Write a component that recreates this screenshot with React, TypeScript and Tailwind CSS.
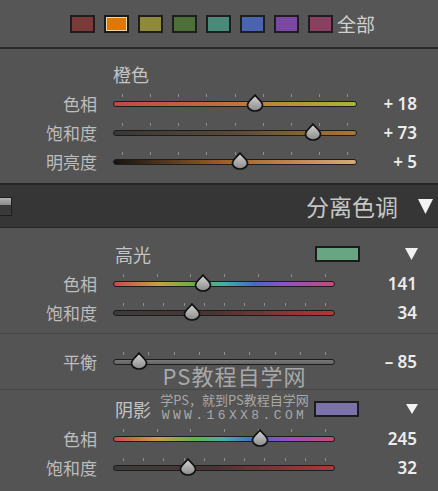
const swatches = [
  "bg-[#7a3a38]",
  "bg-[#e07800]",
  "bg-[#8e8a3a]",
  "bg-[#4e7038]",
  "bg-[#4a8a78]",
  "bg-[#4a64b0]",
  "bg-[#7a48a0]",
  "bg-[#8a4060]",
]

const cjk = "font-['Noto_Sans_CJK_SC',sans-serif]"

interface SliderRowProps {
  label: string
  value: string
  widthClass: string
  trackClass: string
  thumb: number
  ticks: number
  tickStart: number
  tickEnd: number
}

function Thumb({ left }: { left: number }) {
  return (
    <svg
      className="absolute top-[-7px]"
      style={{ left: left - 9 }}
      width="18"
      height="18"
      viewBox="0 0 18 18"
    >
      <defs>
        <linearGradient id="tg" x1="0" y1="0" x2="0" y2="1">
          <stop offset="0" stopColor="#d6d6d6" />
          <stop offset="1" stopColor="#8a8a8a" />
        </linearGradient>
      </defs>
      <path
        d="M9 1 C10.5 3.5 16.5 7.5 16.5 11 A7.5 6 0 0 1 1.5 11 C1.5 7.5 7.5 3.5 9 1 Z"
        fill="url(#tg)"
        stroke="#121212"
        strokeWidth="1.7"
        strokeLinejoin="round"
      />
    </svg>
  )
}

function SliderRow({ label, value, widthClass, trackClass, thumb, ticks, tickStart, tickEnd }: SliderRowProps) {
  const step = (tickEnd - tickStart) / (ticks - 1)
  return (
    <div className="flex h-[29px] items-center">
      <div className={`w-[97px] text-right text-[17px] leading-none text-[#bdbdbd] ${cjk}`}>{label}</div>
      <div className={`relative ml-[16px] h-[6px] ${widthClass}`}>
        {Array.from({ length: ticks }).map((_, i) => (
          <div
            key={i}
            className="absolute top-[-7px] h-[3px] w-px bg-[#8e8e8e]"
            style={{ left: Math.round(tickStart + i * step) }}
          />
        ))}
        <div className={`h-[6px] w-full rounded-full border border-[#1c1c1c] ${trackClass}`} />
        <Thumb left={thumb} />
      </div>
      <div className="flex-1 pr-[21px] text-right font-['Noto_Sans',sans-serif] text-[17px] font-semibold leading-none text-[#ececec]">
        {value}
      </div>
    </div>
  )
}

function DownTriangle({ w, h }: { w: number; h: number }) {
  return (
    <svg width={w} height={h} viewBox={`0 0 ${w} ${h}`}>
      <polygon points={`0,0 ${w},0 ${w / 2},${h}`} fill="#f2f2f2" />
    </svg>
  )
}

const hueFull =
  "bg-[linear-gradient(to_right,#c84a4e,#c8a040_20%,#68b048_36%,#40b0a8_50%,#4868c8_64%,#9050c8_78%,#c84a78_100%)]"
const satRed = "bg-[linear-gradient(to_right,#3c3c3c,#4a3434_45%,#b03838)]"

export default function App() {
  return (
    <div className={`relative h-[491px] w-[438px] overflow-hidden bg-[#545454] ${cjk}`}>
      {/* 颜色色块 */}
      <div className="flex h-[47px] items-center bg-[#565656] pl-[70px]">
        <div className="flex gap-[9px]">
          {swatches.map((c, i) => (
            <div
              key={i}
              className={`h-[18px] w-[25px] border-2 ${i === 1 ? "border-[#1a1a1a] outline outline-1 outline-[#e8d8b0] -outline-offset-3" : "border-[#1e1e1e]"} ${c}`}
            />
          ))}
        </div>
        <span className="ml-[4px] text-[19px] leading-none text-[#d0d0d0]">全部</span>
      </div>
      <div className="h-[2px] bg-[#2a2a2a]" />

      {/* 橙色 */}
      <div className="pt-[10px] pb-[7px]">
        <div className="flex h-[30px] items-center pl-[113px] text-[18px] leading-none text-[#c4c4c4]">橙色</div>
        <SliderRow
          label="色相"
          value="+ 18"
          widthClass="w-[244px]"
          trackClass="bg-[linear-gradient(to_right,#c04848,#c07838_55%,#a8b838)]"
          thumb={142}
          ticks={9}
          tickStart={9}
          tickEnd={234}
        />
        <SliderRow
          label="饱和度"
          value="+ 73"
          widthClass="w-[244px]"
          trackClass="bg-[linear-gradient(to_right,#383838,#5a4a38_50%,#a87838)]"
          thumb={200}
          ticks={9}
          tickStart={9}
          tickEnd={234}
        />
        <SliderRow
          label="明亮度"
          value="+ 5"
          widthClass="w-[244px]"
          trackClass="bg-[linear-gradient(to_right,#141414,#a86828_50%,#d4ac7c)]"
          thumb={127}
          ticks={9}
          tickStart={9}
          tickEnd={234}
        />
      </div>

      {/* 分离色调 标题栏 */}
      <div className="flex h-[45px] items-center border-t-2 border-b border-[#262626] bg-[#363636]">
        <div className="flex h-[19px] w-[12px] flex-col border border-l-0 border-[#1e1e1e]">
          <div className="h-[7px] bg-[linear-gradient(to_bottom,#b4b4b4,#8a8a8a)]" />
          <div className="flex-1 bg-[#3a3a3a]" />
        </div>
        <span className="ml-auto text-[23px] leading-none text-[#c6c6c6]">分离色调</span>
        <div className="mr-[5px] ml-[20px]">
          <DownTriangle w={15} h={15} />
        </div>
      </div>

      {/* 高光 */}
      <div className="border-b border-[#474747] pt-[11px] pb-[6px]">
        <div className="flex h-[30px] items-center">
          <span className="pl-[115px] text-[18px] leading-none text-[#c4c4c4]">高光</span>
          <div className="ml-auto h-[16px] w-[45px] border-2 border-[#1c1c1c] bg-[#68a583]" />
          <div className="mr-[20px] ml-[45px]">
            <DownTriangle w={13} h={12} />
          </div>
        </div>
        <SliderRow
          label="色相"
          value="141"
          widthClass="w-[222px]"
          trackClass={hueFull}
          thumb={90}
          ticks={7}
          tickStart={10}
          tickEnd={212}
        />
        <SliderRow
          label="饱和度"
          value="34"
          widthClass="w-[222px]"
          trackClass={satRed}
          thumb={79}
          ticks={11}
          tickStart={10}
          tickEnd={212}
        />
      </div>

      {/* 平衡 */}
      <div className="border-b border-[#474747] pt-[13px] pb-[13px]">
        <SliderRow
          label="平衡"
          value="– 85"
          widthClass="w-[222px]"
          trackClass="bg-[linear-gradient(to_bottom,#7a7a7a,#626262)]"
          thumb={26}
          ticks={9}
          tickStart={10}
          tickEnd={212}
        />
      </div>

      {/* 阴影 */}
      <div className="pt-[4px]">
        <div className="flex h-[30px] items-center">
          <span className="pl-[115px] text-[18px] leading-none text-[#c4c4c4]">阴影</span>
          <div className="ml-auto h-[16px] w-[45px] border-2 border-[#1c1c1c] bg-[#7a72a8]" />
          <div className="mr-[20px] ml-[47px]">
            <DownTriangle w={12} h={10} />
          </div>
        </div>
        <SliderRow
          label="色相"
          value="245"
          widthClass="w-[222px]"
          trackClass={hueFull}
          thumb={147}
          ticks={7}
          tickStart={10}
          tickEnd={212}
        />
        <SliderRow
          label="饱和度"
          value="32"
          widthClass="w-[222px]"
          trackClass={satRed}
          thumb={75}
          ticks={11}
          tickStart={10}
          tickEnd={212}
        />
      </div>

      {/* 水印 */}
      <div className="pointer-events-none absolute top-[364px] left-[157px] flex w-[155px] flex-col items-center text-[#cfcfcf]/70">
        <span className="text-[22px] leading-none tracking-[1px]">PS教程自学网</span>
        <span className="mt-[7px] text-[13px] leading-none">学PS，就到PS教程自学网</span>
        <span className="mt-[3px] font-['Liberation_Mono',monospace] text-[13px] leading-none tracking-[3.4px]">
          WWW.16XX8.COM
        </span>
      </div>
    </div>
  )
}
